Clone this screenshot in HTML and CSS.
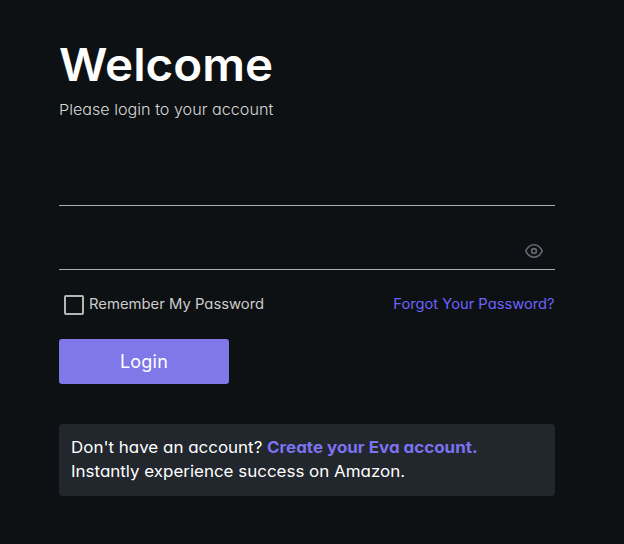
FILE: index.html
```html
<!DOCTYPE html>
<html lang="en">
<head>
<meta charset="utf-8">
<title>Login</title>
<link rel="stylesheet" href="styles.css">
</head>
<body>
<main class="login">
  <h1 class="title">Welcome</h1>
  <p class="subtitle">Please login to your account</p>
  <form class="form">
    <div class="field"></div>
    <div class="field field-password">
      <svg class="eye" viewBox="0 0 20 20" fill="none" stroke="currentColor" stroke-width="1.6" stroke-linecap="round" stroke-linejoin="round"><path d="M1.700 10C3.700 6 6.500 3.700 10 3.700s6.300 2.300 8.300 6.300c-2 4-4.800 6.300-8.300 6.300S3.700 14 1.700 10z"/><circle cx="10" cy="10" r="2.400"/></svg>
    </div>
    <div class="options">
      <label class="remember"><span class="checkbox"></span><span class="remember-text">Remember My Password</span></label>
      <a class="forgot">Forgot Your Password?</a>
    </div>
    <button class="submit" type="button">Login</button>
  </form>
  <div class="signup">
    <div class="line">Don't have an account? <a class="create">Create your Eva account.</a></div>
    <div class="line">Instantly experience success on Amazon.</div>
  </div>
</main>
</body>
</html>
```
FILE: styles.css
```css
* { box-sizing: border-box; }
body {
  margin: 0;
  background: #0e1113;
  color: #fff;
  font-family: Inter, "Open Sans", sans-serif;
  font-feature-settings: "cv11";
}
.login { width: 496px; margin-left: 59px; padding-top: 35px; }
.title { margin: 0; height: 60px; line-height: 60px; font-size: 45px; font-weight: 600; white-space: nowrap; transform: scaleX(1.056); transform-origin: left; }
.subtitle { margin: 3px 0 0; height: 24px; line-height: 24px; font-size: 15px; font-weight: 300; color: #d6d6d6; white-space: nowrap; transform: scaleX(1.077); transform-origin: left; }
.form { padding-top: 20px; }
.field { height: 64px; border-bottom: 1px solid #a9adae; }
.field-password { display: flex; justify-content: flex-end; align-items: flex-end; padding: 0 11px 8px 0; }
.eye { width: 20px; height: 20px; color: #666a78; }
.options { display: flex; justify-content: space-between; align-items: center; height: 20px; margin-top: 25px; font-size: 14px; line-height: 20px; white-space: nowrap; }
.remember { display: flex; align-items: center; gap: 5px; padding-left: 5px; color: #ccc; }
.remember-text { padding-bottom: 2px; transform: scaleX(1.058); transform-origin: left; }
.checkbox { width: 20px; height: 20px; border: 2px solid #b5b5b5; border-radius: 2px; }
.forgot { padding-bottom: 2px; color: #6c63ff; transform: scaleX(1.05); transform-origin: right; }
.submit { display: block; width: 170px; height: 45px; margin-top: 24px; padding: 0; border: 0; border-radius: 3px; background: #8078e8; color: #fff; font: inherit; font-size: 18px; line-height: 45px; letter-spacing: 0.2px; font-feature-settings: inherit; }
.signup { margin-top: 40px; height: 72px; padding: 11px 12px 13px; border-radius: 4px; background: #22262d; font-size: 16px; line-height: 24px; white-space: nowrap; }
.line { transform: scaleX(1.059); transform-origin: left; }
.create { color: #7b73f0; font-weight: 700; }
```
